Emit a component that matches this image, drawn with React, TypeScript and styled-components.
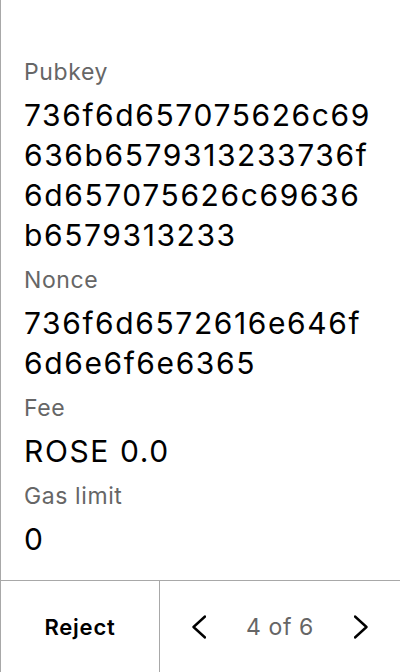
import React from "react";
import styled, { createGlobalStyle } from "styled-components";

const Global = createGlobalStyle`
  html, body { margin: 0; padding: 0; background: #fff; }
  body { font-family: Inter, "Noto Sans", sans-serif; }
  * { box-sizing: border-box; }
`;

const Screen = styled.div`
  height: 672px;
  width: 400px;
  display: flex;
  flex-direction: column;
  border-left: 1px solid #a8a8a8;
  background: #fff;
`;

const Content = styled.div`
  flex: 1;
  padding: 58px 24px 0 23px;
  display: flex;
  flex-direction: column;
`;

const Field = styled.div`
  display: flex;
  flex-direction: column;
  margin-bottom: 11px;
`;

const Label = styled.div`
  font-size: 23px;
  line-height: 28px;
  letter-spacing: 0.6px;
  color: #666;
  margin-bottom: 9px;
`;

const Value = styled.div`
  font-size: 30px;
  line-height: 40px;
  letter-spacing: 1.6px;
  color: #000;
  word-break: break-all;
`;

const Footer = styled.div`
  height: 92px;
  border-top: 1px solid #a8a8a8;
  display: flex;
`;

const RejectButton = styled.button`
  width: 159px;
  border: none;
  border-right: 1px solid #a8a8a8;
  background: transparent;
  font-family: inherit;
  font-size: 22px;
  font-weight: 600;
  letter-spacing: 0.8px;
  color: #000;
  padding: 0;
`;

const Pager = styled.div`
  flex: 1;
  display: flex;
  align-items: center;
  justify-content: space-between;
  padding: 0 32px;
`;

const PagerText = styled.span`
  font-size: 23px;
  letter-spacing: 0.6px;
  color: #666;
`;

const Chevron = ({ dir }: { dir: "left" | "right" }) => (
  <svg width="14" height="24" viewBox="0 0 14 24" fill="none">
    <path
      d={dir === "left" ? "M13 1.5 L1.5 12 L13 22.5" : "M1 1.5 L12.5 12 L1 22.5"}
      stroke="#000"
      strokeWidth="2.4"
      strokeLinecap="round"
      strokeLinejoin="round"
    />
  </svg>
);

const fields = [
  { label: "Pubkey", value: "736f6d657075626c69636b6579313233736f6d657075626c69636b6579313233" },
  { label: "Nonce", value: "736f6d6572616e646f6d6e6f6e6365" },
  { label: "Fee", value: "ROSE 0.0" },
  { label: "Gas limit", value: "0" },
];

export default function App() {
  return (
    <>
      <Global />
      <Screen>
        <Content>
          {fields.map((f) => (
            <Field key={f.label}>
              <Label>{f.label}</Label>
              <Value>{f.value}</Value>
            </Field>
          ))}
        </Content>
        <Footer>
          <RejectButton>Reject</RejectButton>
          <Pager>
            <Chevron dir="left" />
            <PagerText>4 of 6</PagerText>
            <Chevron dir="right" />
          </Pager>
        </Footer>
      </Screen>
    </>
  );
}
